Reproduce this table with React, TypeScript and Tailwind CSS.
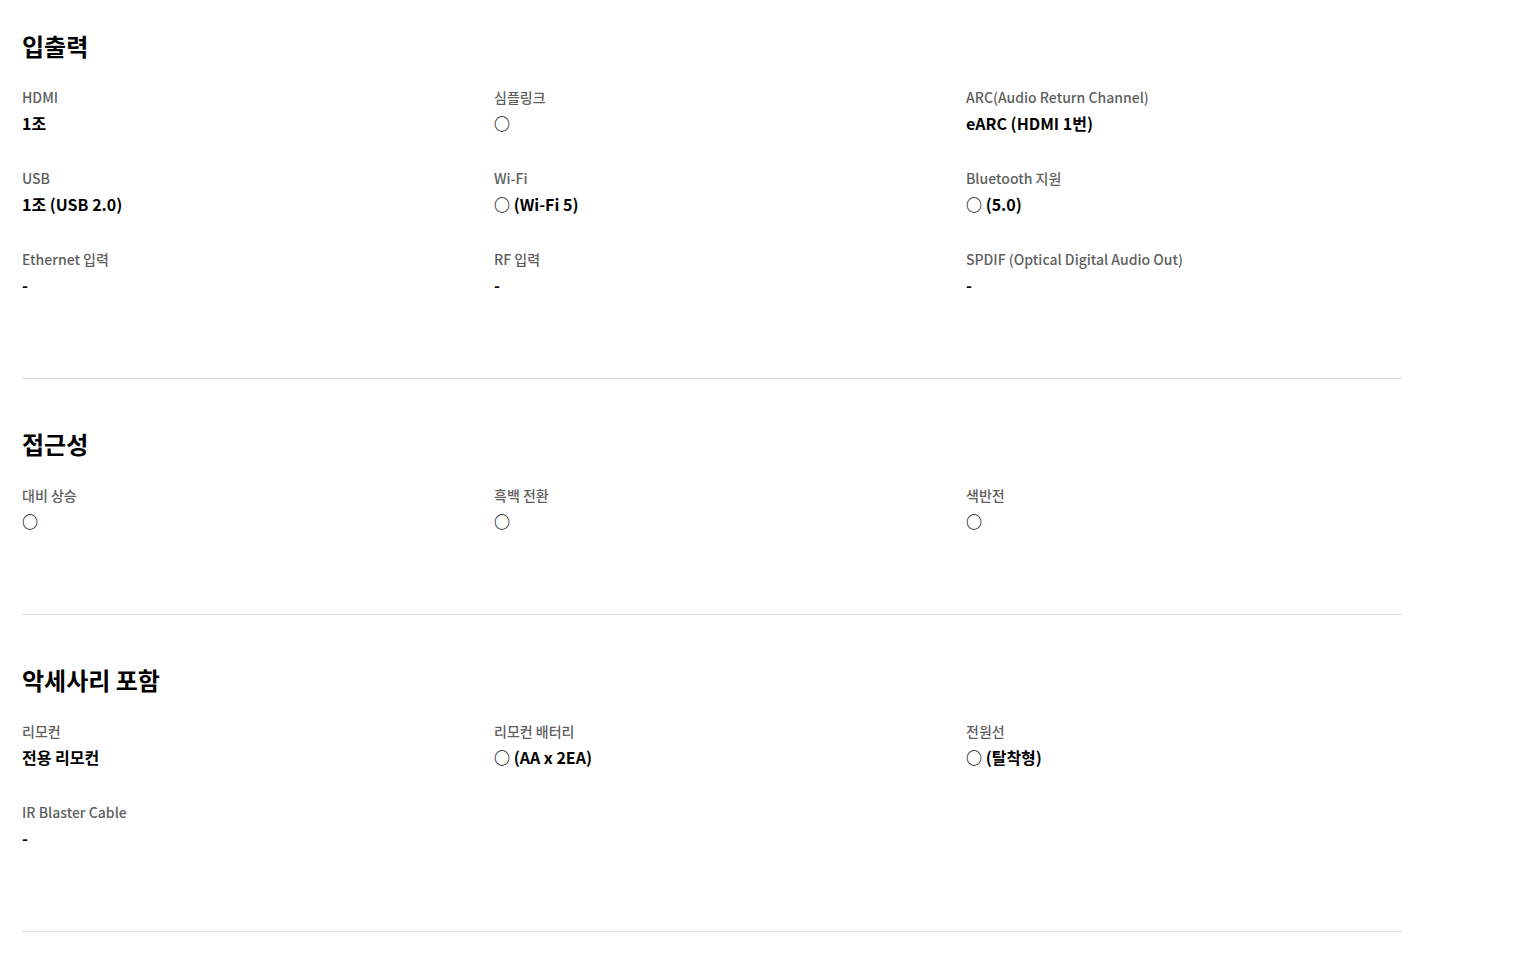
import React from 'react';

type Spec = { label: string; value: string };

const sections: { title: string; items: Spec[] }[] = [
    {
        title: '입출력',
        items: [
            { label: 'HDMI', value: '1조' },
            { label: '심플링크', value: '○' },
            { label: 'ARC(Audio Return Channel)', value: 'eARC (HDMI 1번)' },
            { label: 'USB', value: '1조 (USB 2.0)' },
            { label: 'Wi-Fi', value: '○ (Wi-Fi 5)' },
            { label: 'Bluetooth 지원', value: '○ (5.0)' },
            { label: 'Ethernet 입력', value: '-' },
            { label: 'RF 입력', value: '-' },
            { label: 'SPDIF (Optical Digital Audio Out)', value: '-' },
        ],
    },
    {
        title: '접근성',
        items: [
            { label: '대비 상승', value: '○' },
            { label: '흑백 전환', value: '○' },
            { label: '색반전', value: '○' },
        ],
    },
    {
        title: '악세사리 포함',
        items: [
            { label: '리모컨', value: '전용 리모컨' },
            { label: '리모컨 배터리', value: '○ (AA x 2EA)' },
            { label: '전원선', value: '○ (탈착형)' },
            { label: 'IR Blaster Cable', value: '-' },
        ],
    },
];

export default function App() {
    return (
        <div
            className="min-h-screen bg-white pl-[22px]"
            style={{ fontFamily: '"Noto Sans CJK KR", "Noto Sans", sans-serif' }}
        >
            <div className="w-[1380px]">
                {sections.map((s, i) => (
                    <section
                        key={s.title}
                        className={`${i === 0 ? 'pt-[30px]' : 'pt-[49px]'} pb-[81px] border-b border-[#dddddd]`}
                    >
                        <h2 className="text-[24px] leading-[32px] font-bold text-black">{s.title}</h2>
                        <div className="mt-[25px] grid grid-cols-[472px_472px_436px] gap-y-[33px]">
                            {s.items.map((it) => (
                                <div key={it.label}>
                                    <p className="text-[14px] leading-[20px] font-medium text-[#5f5f5f]">{it.label}</p>
                                    <p className="mt-[4px] text-[16px] leading-[24px] font-bold text-black">{it.value}</p>
                                </div>
                            ))}
                        </div>
                    </section>
                ))}
            </div>
        </div>
    );
}
